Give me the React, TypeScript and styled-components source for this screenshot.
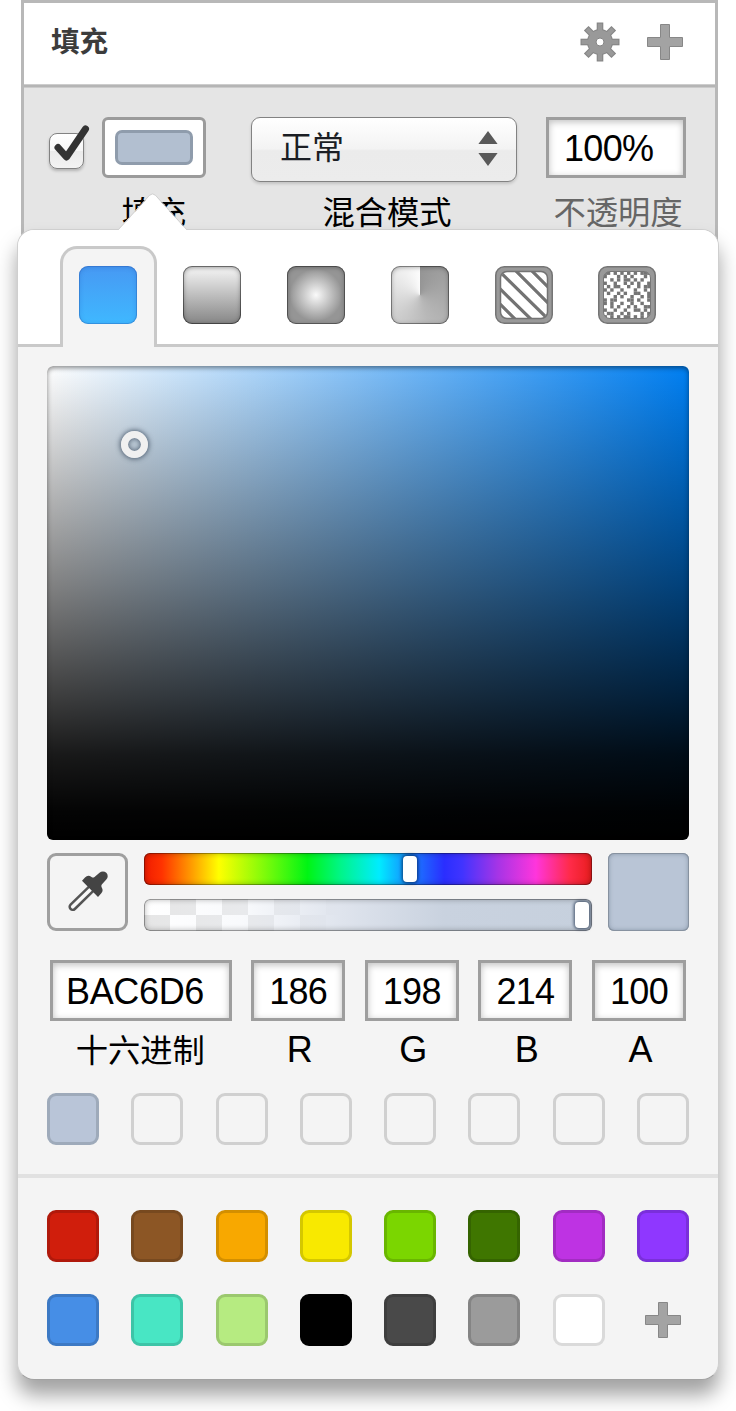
import React from "react";
import styled, { createGlobalStyle } from "styled-components";

const GlobalStyle = createGlobalStyle`
  *, *::before, *::after { box-sizing: border-box; }
  body {
    margin: 0;
    background: #fff;
    color: #000;
    font-family: "Liberation Sans", "Noto Sans CJK SC", sans-serif;
  }
`;

const CJK = `"Noto Sans CJK SC", sans-serif`;

const Stage = styled.main`
  position: relative;
  width: 736px;
  height: 1411px;
  overflow: hidden;
`;

/* ---------- inspector panel ---------- */

const Inspector = styled.section`
  width: 697px;
  height: 262px;
  margin-left: 21px;
  border: 3px solid #b8b8b8;
  border-bottom: 0;
  background: #e5e5e5;
`;

const InspectorHeader = styled.header`
  display: flex;
  align-items: center;
  height: 81px;
  padding: 0 32px 3px 27px;
  background: #fff;
`;

const HeaderTitle = styled.h1`
  flex: 1;
  margin: 0;
  padding-bottom: 4px;
  font: 700 28.5px/28px ${CJK};
  color: #3c3c3c;
`;

const HeaderActions = styled.div`
  display: flex;
  align-items: center;
  gap: 27px;
`;

const HeaderRule = styled.div`
  height: 4px;
  background: linear-gradient(#cdcdcd 1px, #b5b5b5 1px 3px, #cbcbcb 3px);
`;

const InspectorRow = styled.div`
  display: flex;
  align-items: flex-start;
  padding: 29px 29px 0 25px;
`;

const CheckBox = styled.div`
  position: relative;
  width: 35px;
  height: 36px;
  margin: 16px 18px 0 0;
  border: 1px solid #828282;
  border-radius: 8px;
  background: linear-gradient(#fff, #f6f6f6 50%, #ebebeb 50%, #f3f3f3);
  box-shadow: 0 2px 3px rgba(0, 0, 0, 0.22);
`;

const Tick = styled.svg`
  position: absolute;
  left: 4px;
  top: -10px;
`;

const Control = styled.div<{ $width: number; $gap?: number }>`
  width: ${(p) => p.$width}px;
  margin-right: ${(p) => p.$gap ?? 0}px;
`;

const ControlBody = styled.div`
  height: 77px;
`;

const ControlLabel = styled.div<{ $muted?: boolean; $indent?: number }>`
  padding-left: ${(p) => p.$indent ?? 0}px;
  font: 400 32.3px/32px ${CJK};
  text-align: center;
  white-space: nowrap;
  color: ${(p) => (p.$muted ? "#666" : "#000")};
`;

const ColorWell = styled.div`
  height: 61px;
  padding: 10px;
  border: 3px solid #9b9b9b;
  border-radius: 6px;
  background: #fff;
`;

const WellColor = styled.div`
  height: 35px;
  border: 3px solid #8f9cac;
  border-radius: 7px;
  background: #b2bfd0;
`;

const Select = styled.div`
  display: flex;
  justify-content: space-between;
  height: 65px;
  padding: 12px 18px 0 28px;
  border: 1px solid #828282;
  border-radius: 9px;
  background: linear-gradient(#fff, #f3f3f3 49%, #ebebeb 52%, #ececec);
  box-shadow: 0 2px 3px rgba(0, 0, 0, 0.15);
  font: 400 32px/32px ${CJK};
  color: #1b1e24;
`;

const SelectText = styled.span`
  margin-top: -1px;
`;

const Field = styled.div<{ $pad?: number; $tracking?: number }>`
  height: 61px;
  padding-left: ${(p) => p.$pad ?? 0}px;
  border: 3px solid #9e9e9e;
  background: #fff;
  box-shadow: inset 0 2px 7px rgba(0, 0, 0, 0.25);
  font-size: 36px;
  line-height: 57px;
  letter-spacing: ${(p) => p.$tracking ?? -0.7}px;
  text-align: ${(p) => (p.$pad ? "left" : "center")};
`;

/* ---------- popover ---------- */

const Popover = styled.section`
  position: absolute;
  left: 17px;
  top: 229px;
  width: 702px;
  height: 1151px;
  border: 1px solid #cfcfcf;
  border-bottom-color: #a2a2a2;
  border-radius: 17px;
  background: #f4f4f4;
  box-shadow: 0 15px 20px rgba(0, 0, 0, 0.37);
`;

const Pointer = styled.svg`
  position: absolute;
  left: 98px;
  top: -38px;
`;

const TabStrip = styled.nav`
  display: flex;
  align-items: flex-start;
  gap: 6.8px;
  height: 117px;
  padding: 16px 0 0 42px;
  border-bottom: 3px solid #c9c9c9;
  border-radius: 16px 16px 0 0;
  background: #fff;
`;

const Tab = styled.div<{ $active?: boolean }>`
  display: flex;
  justify-content: center;
  width: 97px;
  height: 101px;
  padding: 17px ${(p) => (p.$active ? 1 : 0)}px 0 0;
  border: 3px solid ${(p) => (p.$active ? "#c9c9c9" : "transparent")};
  border-bottom: 0;
  border-radius: 17px 17px 0 0;
  background: ${(p) => (p.$active ? "#f4f4f4" : "transparent")};
`;

const FillIcon = styled.div<{ $paint: string; $edge: string }>`
  width: 58px;
  height: 58px;
  border-radius: 9px;
  background: ${(p) => p.$paint};
  box-shadow: inset 0 0 0 1px ${(p) => p.$edge}, inset 0 1px 5px ${(p) => p.$edge};
`;

const Picker = styled.div`
  padding: 19px 29px 0;
`;

const ColorField = styled.div`
  position: relative;
  height: 474px;
  border-radius: 6px;
  background:
    linear-gradient(to bottom, transparent, rgba(0, 0, 0, 0.49) 46%, rgba(0, 0, 0, 0.76) 70%, rgba(0, 0, 0, 0.9) 82%, rgba(0, 0, 0, 0.985) 94%, #000),
    linear-gradient(to right, #fff, #007ff2);
  box-shadow: inset 0 2px 5px rgba(0, 0, 0, 0.45);
`;

const FieldHandle = styled.div`
  position: absolute;
  left: 74px;
  top: 65px;
  width: 27px;
  height: 27px;
  border: 7px solid #f0f0f0;
  border-radius: 50%;
  box-shadow: 0 0 5px 1px rgba(40, 55, 75, 0.7), inset 0 0 4px 1px rgba(40, 55, 75, 0.6);
`;

const SliderRow = styled.div`
  display: flex;
  justify-content: space-between;
  height: 78px;
  margin-top: 13px;
`;

const DropperButton = styled.div`
  display: flex;
  align-items: center;
  justify-content: center;
  width: 81px;
  border: 3px solid #9f9f9f;
  border-radius: 9px;
`;

const Sliders = styled.div`
  display: flex;
  flex-direction: column;
  justify-content: space-between;
  width: 448px;
`;

const Track = styled.div<{ $paint: string; $at: number }>`
  height: 32px;
  padding: 3px 0 0 ${(p) => p.$at}px;
  border-radius: 6px;
  background: ${(p) => p.$paint};
  box-shadow: inset 0 0 0 1px rgba(0, 0, 0, 0.3), inset 0 0 6px rgba(0, 0, 0, 0.35);
`;

const Thumb = styled.div`
  width: 14px;
  height: 26px;
  border-radius: 4px;
  background: #fff;
  box-shadow: 0 0 3px 1.5px rgba(0, 20, 50, 0.55);
`;

const Preview = styled.div`
  width: 81px;
  border-radius: 6px;
  background: #b9c5d6;
  box-shadow: inset 0 0 0 1px #8792a0, inset 0 0 5px rgba(60, 75, 95, 0.5);
`;

const ValueRow = styled.div`
  display: flex;
  justify-content: space-between;
  margin: 29px 3px 0;
`;

const Value = styled.div<{ $wide?: boolean }>`
  width: ${(p) => (p.$wide ? 181.5 : 94)}px;
`;

const ValueLabel = styled.div<{ $cjk?: boolean }>`
  height: 37px;
  padding-left: ${(p) => (p.$cjk ? 0 : 3)}px;
  padding-right: ${(p) => (p.$cjk ? 1 : 0)}px;
  margin-top: 10px;
  font-family: ${(p) => (p.$cjk ? CJK : `"Liberation Sans", sans-serif`)};
  font-size: ${(p) => (p.$cjk ? 32.3 : 36)}px;
  line-height: ${(p) => (p.$cjk ? 35 : 38)}px;
  text-align: center;
`;

const SwatchRow = styled.div`
  display: flex;
  justify-content: space-between;
  height: 52px;
`;

const Swatch = styled.div<{ $color: string; $edge: string }>`
  width: 52px;
  height: 52px;
  border-radius: 9px;
  background: ${(p) => p.$color};
  border: 3px solid ${(p) => p.$edge};
`;

const AddSlot = styled.div`
  display: flex;
  align-items: center;
  justify-content: center;
  width: 52px;
`;

const RecentSwatches = styled.div`
  padding: 25px 29px 29px;
`;

const Presets = styled.div`
  display: flex;
  flex-direction: column;
  gap: 32px;
  padding: 32px 29px 0;
  border-top: 4px solid #e1e1e1;
`;

/* ---------- icons ---------- */

const PlusIcon = () => (
  <svg width="36" height="36" viewBox="0 0 36 36">
    <path
      d="M13.5.5h9v13h13v9h-13v13h-9v-13h-13v-9h13z"
      fill="#a3a3a3"
      stroke="#878787"
    />
  </svg>
);

const GearIcon = () => {
  const teeth = [0, 45, 90, 135];
  return (
    <svg width="40" height="40" viewBox="-20 -20 40 40">
      <g fill="#858585">
        {teeth.map((a) => (
          <rect key={a} x="-3.3" y="-19.5" width="6.6" height="39" transform={`rotate(${a})`} />
        ))}
        <circle r="13" />
      </g>
      <g fill="#999">
        {teeth.map((a) => (
          <rect key={a} x="-2.2" y="-18.4" width="4.4" height="36.8" transform={`rotate(${a})`} />
        ))}
        <circle r="12" />
      </g>
      <circle r="4" fill="#fff" stroke="#858585" />
    </svg>
  );
};

const ArrowsIcon = () => (
  <svg width="20" height="36" viewBox="0 0 20 36">
    <path d="M10 1l9.6 13H.4zM.4 23h19.200L10 36z" fill="#595959" />
  </svg>
);

const DropperIcon = () => (
  <svg width="42" height="42" viewBox="0 0 42 42">
    <path d="M25 17L5.700 35.800" stroke="#555" strokeWidth="8.600" strokeLinecap="round" />
    <path d="M25 17L5.700 35.800" stroke="#f8f8f8" strokeWidth="3.600" strokeLinecap="round" />
    <path
      d="M15 9.800L18 6.500Q21 3.500 24.500 6Q26 7 27.500 6L32.500 1.800A4.700 4.700 0 0 1 39.300 8.600L34.800 13.500Q33.800 15 35 17Q36.500 20 34.300 22.300L31 26Z"
      fill="#444"
    />
  </svg>
);

const PatternIcon = () => (
  <svg width="58" height="58" viewBox="0 0 58 58">
    <defs>
      <clipPath id="stripes">
        <rect x="6" y="6" width="46" height="46" rx="6" />
      </clipPath>
    </defs>
    <rect x=".75" y=".75" width="56.500" height="56.500" rx="8.500" fill="#999" stroke="#757575" strokeWidth="1.500" />
    <rect x="5.500" y="5.500" width="47" height="47" rx="6.500" fill="#fff" stroke="#737373" strokeWidth="1.500" />
    <g clipPath="url(#stripes)" stroke="#737373" strokeWidth="3.200">
      <path d="M34 2L58 26M18 2L58 42M-2 -1L58 58M-1 17L44 61M-1 32L28 61" />
    </g>
  </svg>
);

const NOISE = [
  "##.#.#.#.#.###",
  "#...#.#.#...#.",
  "..#.#.##.#.#..",
  "#..#..#.#.#..#",
  ".#.##..#..#.##",
  "#.#..#...#..#.",
  ".#..#.#..##..#",
  "...#.#..#..#.#",
  "#.##...##.#..#",
  "#.#..#..#..#..",
  "..#.#..#.#..##",
  "#..#..#..##.#.",
  ".##..#.#...#.#",
  "#.#.#.##.#.#.#",
];

const NoiseIcon = () => (
  <svg width="58" height="58" viewBox="0 0 58 58">
    <defs>
      <clipPath id="grain">
        <rect x="5.500" y="5.500" width="47" height="47" rx="6.500" />
      </clipPath>
    </defs>
    <rect x=".75" y=".75" width="56.500" height="56.500" rx="8.500" fill="#999" stroke="#757575" strokeWidth="1.500" />
    <rect x="5.500" y="5.500" width="47" height="47" rx="6.500" fill="#fff" />
    <g clipPath="url(#grain)" fill="#757575">
      {NOISE.flatMap((row, y) =>
        row.split("").map((c, x) =>
          c === "#" ? (
            <rect key={`${x}-${y}`} x={5.5 + x * 3.357} y={5.5 + y * 3.357} width="3.400" height="3.400" />
          ) : null
        )
      )}
    </g>
    <rect x="5.500" y="5.500" width="47" height="47" rx="6.500" fill="none" stroke="#777" />
  </svg>
);

/* ---------- data ---------- */

const HUE =
  "linear-gradient(to right, #f01c00, #ff3300 4%, #ff9a00 10.500%, #ffff00 16.700%, #7dfb0a 27%, #00f514 36.500%, #00f58a 44%, #00ecff 52.500%, #1a7cff 60%, #2a2eff 67%, #4034ff 71%, #a634e6 79%, #ff35dc 87.500%, #ff2b4a 95%, #e81d1d)";

const ALPHA =
  "linear-gradient(to right, rgba(238,242,248,0), rgba(236,240,247,.35) 22%, #dfe4ed 44%, #c9d2df 67%, #c6d0dd), repeating-conic-gradient(#fff 0 25%, #e6e6e6 0 50%) -26px 0 / 52px 32px";

const VALUES = [
  ["186", "R"],
  ["198", "G"],
  ["214", "B"],
  ["100", "A"],
];

const PRESETS = [
  [
    ["#d01e0c", "#b0190b"],
    ["#8c5625", "#77491f"],
    ["#f8a800", "#d38f00"],
    ["#f8e900", "#d4c700"],
    ["#7bd600", "#69b600"],
    ["#3f7600", "#356400"],
    ["#be33e3", "#a22cc2"],
    ["#8f37ff", "#7a2fda"],
  ],
  [
    ["#468ee6", "#3c79c4"],
    ["#48e6c4", "#3dc4a7"],
    ["#b6eb81", "#9bc86e"],
    ["#000", "#000"],
    ["#494949", "#3e3e3e"],
    ["#9b9b9b", "#848484"],
    ["#fff", "#dadada"],
  ],
];

export default function App() {
  return (
    <>
      <GlobalStyle />
      <Stage>
        <Inspector>
          <InspectorHeader>
            <HeaderTitle>填充</HeaderTitle>
            <HeaderActions>
              <GearIcon />
              <PlusIcon />
            </HeaderActions>
          </InspectorHeader>
          <HeaderRule />
          <InspectorRow>
            <CheckBox>
              <Tick width="40" height="40" viewBox="0 0 40 40" fill="none">
                <path
                  d="M4 23.500L12.500 33L31.500 5"
                  stroke="#333"
                  strokeWidth="7"
                  strokeLinecap="round"
                  strokeLinejoin="round"
                />
              </Tick>
            </CheckBox>
            <Control $width={104} $gap={45}>
              <ControlBody>
                <ColorWell>
                  <WellColor />
                </ColorWell>
              </ControlBody>
              <ControlLabel>填充</ControlLabel>
            </Control>
            <Control $width={266} $gap={29}>
              <ControlBody>
                <Select>
                  <SelectText>正常</SelectText>
                  <ArrowsIcon />
                </Select>
              </ControlBody>
              <ControlLabel $indent={6}>混合模式</ControlLabel>
            </Control>
            <Control $width={140}>
              <ControlBody>
                <Field $pad={15}>100%</Field>
              </ControlBody>
              <ControlLabel $muted $indent={4}>
                不透明度
              </ControlLabel>
            </Control>
          </InspectorRow>
        </Inspector>

        <Popover>
          <Pointer width="73" height="40" viewBox="0 0 73 40">
            <path d="M0 39L2 38.500L33.500 3.800Q36.500 .8 39.500 3.800L71 38.500L73 39V40H0Z" fill="#fff" />
            <path d="M2 38L33.500 3.300Q36.500 .3 39.500 3.300L71 38" fill="none" stroke="#d2d2d2" />
          </Pointer>
          <TabStrip>
            <Tab $active>
              <FillIcon $paint="linear-gradient(#4799f3, #3fb8ff)" $edge="rgba(30,80,170,.3)" />
            </Tab>
            <Tab>
              <FillIcon $paint="linear-gradient(#ececec 10%, #858585)" $edge="rgba(0,0,0,.42)" />
            </Tab>
            <Tab>
              <FillIcon $paint="radial-gradient(circle, #fafafa, #959595 64%)" $edge="rgba(0,0,0,.36)" />
            </Tab>
            <Tab>
              <FillIcon $paint="conic-gradient(#959595, #b8b8b8 45%, #ddd 75%, #fcfcfc)" $edge="rgba(0,0,0,.36)" />
            </Tab>
            <Tab>
              <PatternIcon />
            </Tab>
            <Tab>
              <NoiseIcon />
            </Tab>
          </TabStrip>

          <Picker>
            <ColorField>
              <FieldHandle />
            </ColorField>
            <SliderRow>
              <DropperButton>
                <DropperIcon />
              </DropperButton>
              <Sliders>
                <Track $paint={HUE} $at={259}>
                  <Thumb />
                </Track>
                <Track $paint={ALPHA} $at={431}>
                  <Thumb />
                </Track>
              </Sliders>
              <Preview />
            </SliderRow>
            <ValueRow>
              <Value $wide>
                <Field $pad={13} $tracking={-0.35}>BAC6D6</Field>
                <ValueLabel $cjk>十六进制</ValueLabel>
              </Value>
              {VALUES.map(([value, label]) => (
                <Value key={label}>
                  <Field>{value}</Field>
                  <ValueLabel>{label}</ValueLabel>
                </Value>
              ))}
            </ValueRow>
          </Picker>

          <RecentSwatches>
            <SwatchRow>
              <Swatch $color="#b9c5d8" $edge="#9eaaba" />
              {Array.from({ length: 7 }, (_, i) => (
                <Swatch key={i} $color="#f4f4f4" $edge="#d0d0d0" />
              ))}
            </SwatchRow>
          </RecentSwatches>

          <Presets>
            {PRESETS.map((row, i) => (
              <SwatchRow key={i}>
                {row.map(([color, edge]) => (
                  <Swatch key={color} $color={color} $edge={edge} />
                ))}
                {row.length < 8 && (
                  <AddSlot>
                    <PlusIcon />
                  </AddSlot>
                )}
              </SwatchRow>
            ))}
          </Presets>
        </Popover>
      </Stage>
    </>
  );
}
